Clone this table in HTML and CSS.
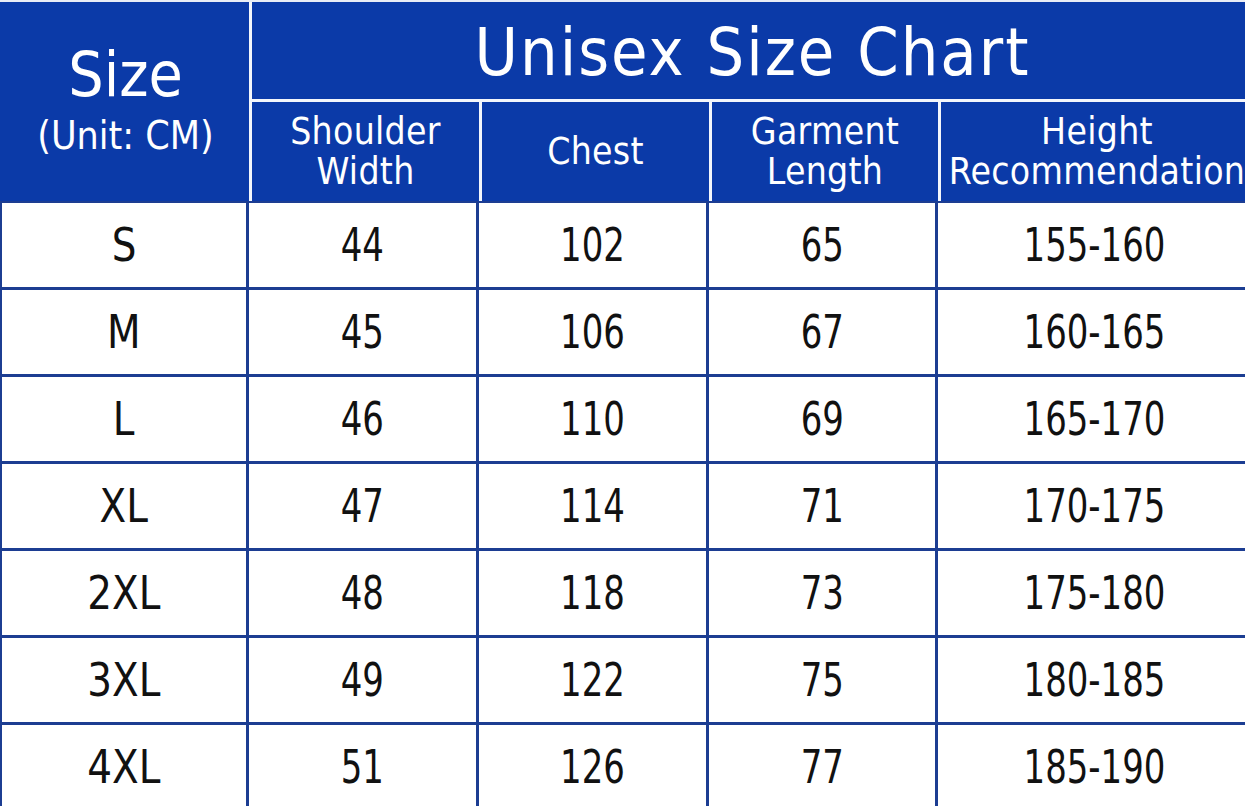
FILE: index.html
```html
<!DOCTYPE html>
<html lang="en">
<head>
<meta charset="utf-8">
<title>Unisex Size Chart</title>
<link rel="stylesheet" href="styles.css">
</head>
<body>
<div class="chart">
  <div class="head">
    <div class="size-cell">
      <div class="size-title">Size</div>
      <div class="size-unit">(Unit: CM)</div>
    </div>
    <div class="title-cell">Unisex Size Chart</div>
    <div class="sub-cell">Shoulder<br>Width</div>
    <div class="sub-cell">Chest</div>
    <div class="sub-cell">Garment<br>Length</div>
    <div class="sub-cell">Height<br>Recommendation</div>
  </div>
  <div class="body">
    <div class="cell"><span class="lbl">S</span></div><div class="cell"><span class="num">44</span></div><div class="cell"><span class="num">102</span></div><div class="cell"><span class="num">65</span></div><div class="cell"><span class="num">155-160</span></div>
    <div class="cell"><span class="lbl">M</span></div><div class="cell"><span class="num">45</span></div><div class="cell"><span class="num">106</span></div><div class="cell"><span class="num">67</span></div><div class="cell"><span class="num">160-165</span></div>
    <div class="cell"><span class="lbl">L</span></div><div class="cell"><span class="num">46</span></div><div class="cell"><span class="num">110</span></div><div class="cell"><span class="num">69</span></div><div class="cell"><span class="num">165-170</span></div>
    <div class="cell"><span class="lbl">XL</span></div><div class="cell"><span class="num">47</span></div><div class="cell"><span class="num">114</span></div><div class="cell"><span class="num">71</span></div><div class="cell"><span class="num">170-175</span></div>
    <div class="cell"><span class="lbl">2XL</span></div><div class="cell"><span class="num">48</span></div><div class="cell"><span class="num">118</span></div><div class="cell"><span class="num">73</span></div><div class="cell"><span class="num">175-180</span></div>
    <div class="cell"><span class="lbl">3XL</span></div><div class="cell"><span class="num">49</span></div><div class="cell"><span class="num">122</span></div><div class="cell"><span class="num">75</span></div><div class="cell"><span class="num">180-185</span></div>
    <div class="cell"><span class="lbl">4XL</span></div><div class="cell"><span class="num">51</span></div><div class="cell"><span class="num">126</span></div><div class="cell"><span class="num">77</span></div><div class="cell"><span class="num">185-190</span></div>
  </div>
</div>
</body>
</html>
```

FILE: styles.css
```css
html, body {
  margin: 0;
  padding: 0;
  background: #ffffff;
  overflow: hidden;
}

body {
  width: 1245px;
  height: 806px;
  font-family: "DejaVu Sans Condensed", "DejaVu Sans", sans-serif;
}

.chart {
  width: 1250px;
  padding: 2px 0 0 0;
  background: #e9edf6;
}

.head {
  display: grid;
  grid-template-columns: 2px 244px 227px 227px 226px 312px;
  grid-template-rows: 97px 99px;
  column-gap: 3px;
  row-gap: 3px;
  background: #f4f6fb;
  color: #ffffff;
}

.head::before {
  content: "";
  grid-column: 1;
  grid-row: 1 / 3;
  margin-right: -3px;
  background: #0b3aa8;
}

.size-cell {
  grid-column: 2;
  grid-row: 1 / 3;
  background: #0b3aa8;
  display: flex;
  flex-direction: column;
  align-items: center;
  justify-content: flex-start;
  padding-top: 40px;
  box-sizing: border-box;
  margin-left: -3px;
}

.size-title {
  font-size: 62px;
  line-height: 66px;
}

.size-unit {
  margin-top: 8px;
  font-size: 39px;
  line-height: 40px;
}

.title-cell {
  grid-column: 3 / 7;
  grid-row: 1;
  background: #0b3aa8;
  display: flex;
  align-items: center;
  justify-content: center;
  font-size: 66px;
  letter-spacing: 2px;
  padding-top: 4px;
  box-sizing: border-box;
}

.sub-cell {
  grid-row: 2;
  background: #0b3aa8;
  display: flex;
  align-items: center;
  justify-content: center;
  text-align: center;
  font-size: 37px;
  line-height: 40px;
  letter-spacing: 0.3px;
}

.body {
  display: grid;
  grid-template-columns: 244px 227px 227px 226px 312px;
  grid-auto-rows: 84px;
  column-gap: 3px;
  row-gap: 3px;
  background: #1c3d92;
  padding: 2px 0 3px 2px;
}

.cell {
  background: #ffffff;
  display: flex;
  align-items: center;
  justify-content: center;
  color: #111111;
  font-size: 46px;
}

.num {
  display: inline-block;
  transform: scaleX(0.82);
}

.lbl {
  display: inline-block;
  transform: scaleX(0.94);
}
```
